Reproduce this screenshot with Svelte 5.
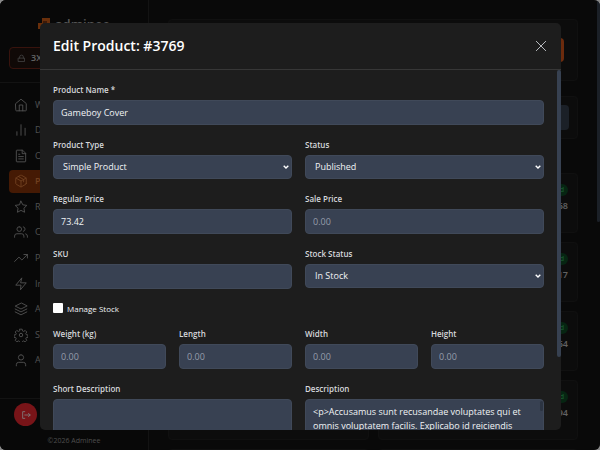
<script lang="ts">
	const nav = [
		{ label: 'Widgets', icon: 'home' },
		{ label: 'Dashboard', icon: 'bars' },
		{ label: 'Orders', icon: 'file' },
		{ label: 'Products', icon: 'box', active: true },
		{ label: 'Reviews', icon: 'star' },
		{ label: 'Customers', icon: 'users' },
		{ label: 'Performance', icon: 'trend' },
		{ label: 'Integrations', icon: 'bolt' },
		{ label: 'Apps', icon: 'layers' },
		{ label: 'Settings', icon: 'gear' },
		{ label: 'Account', icon: 'user' }
	];

	const icons: Record<string, string[]> = {
		home: ['M3 9.500l9-7.500 9 7.500V21a1 1 0 0 1-1 1H4a1 1 0 0 1-1-1z', 'M9 22V12h6v10'],
		bars: ['M5 21v-6', 'M12 21V3', 'M19 21V9'],
		file: ['M14 2H5a1 1 0 0 0-1 1v18a1 1 0 0 0 1 1h14a1 1 0 0 0 1-1V8z', 'M14 2v6h6', 'M8 9h2', 'M8 13h8', 'M8 17h8'],
		box: [
			'M21 16V8a2 2 0 0 0-1-1.730l-7-4a2 2 0 0 0-2 0l-7 4A2 2 0 0 0 3 8v8a2 2 0 0 0 1 1.730l7 4a2 2 0 0 0 2 0l7-4A2 2 0 0 0 21 16z',
			'M3.300 7L12 12l8.700-5',
			'M12 22V12',
			'M7.500 4.300l9 5.100v4'
		],
		star: ['M12 2l3.090 6.260L22 9.270l-5 4.870 1.180 6.880L12 17.770l-6.180 3.250L7 14.140 2 9.270l6.910-1.010z'],
		users: [
			'M17 21v-2a4 4 0 0 0-4-4H5a4 4 0 0 0-4 4v2',
			'M9 3a4 4 0 1 0 0 8 4 4 0 1 0 0-8',
			'M23 21v-2a4 4 0 0 0-3-3.870',
			'M16 3.130a4 4 0 0 1 0 7.750'
		],
		trend: ['M23 6l-9.500 9.500-5-5L1 18', 'M17 6h6v6'],
		bolt: ['M13 2L3 14h9l-1 8 10-12h-9z'],
		layers: ['M12 2L2 7l10 5 10-5z', 'M2 12l10 5 10-5', 'M2 17l10 5 10-5'],
		gear: [
			'M12 9a3 3 0 1 0 0 6 3 3 0 1 0 0-6',
			'M10 2h4l.6 3 2 .9 2.600-1.700 2.700 2.700-1.700 2.600.8 2 3 .5v4l-3 .5-.8 2 1.700 2.600-2.700 2.700-2.600-1.700-2 .9-.6 3h-4l-.6-3-2-.9-2.600 1.700-2.700-2.700 1.700-2.600-.8-2-3-.5v-4l3-.5.8-2-1.700-2.600 2.700-2.700 2.600 1.700 2-.9z'
		],
		user: ['M20 22v-2a4 4 0 0 0-4-4H8a4 4 0 0 0-4 4v2', 'M12 3a4.500 4.500 0 1 0 0 9 4.500 4.500 0 1 0 0-9'],
		lock: ['M4 11h16v9H4z', 'M7 11V8a5 5 0 0 1 10 0v3'],
		logout: ['M9 4H4v16h5', 'M9 12h13', 'M18 8l4 4-4 4'],
		close: ['M4 4l16 16', 'M20 4L4 20']
	};

	const products = ['$120.40', '$88.68', '$64.10', '$53.17', '$41.95', '$29.64', '$75.20', '$18.94'];

	let name = $state('Gameboy Cover');
	let regular = $state('73.42');
	let sale = $state('');
	let sku = $state('');
	let manage = $state(false);
	let short_description = $state('');
	let description = $state(
		'<p>Accusamus sunt recusandae voluptates qui et omnis voluptatem facilis. Explicabo id reiciendis'
	);
	const sizes = ['Weight (kg)', 'Length', 'Width', 'Height'];
</script>

{#snippet icon(key: string)}
	<svg class="icon" viewBox="0 0 24 24" aria-hidden="true">
		{#each icons[key] as d}<path {d} />{/each}
	</svg>
{/snippet}

{#snippet dropdown(id: string, value: string)}
	<div class="select">
		<select {id}><option>{value}</option></select>
		<svg viewBox="0 0 6 4" aria-hidden="true"><path d="M.7.7L3 3 5.300.7" /></svg>
	</div>
{/snippet}

<div class="app">
	<aside>
		<div class="logo">
			<svg viewBox="0 0 12 12" aria-hidden="true">
				<path d="M0 5h4v6H0zM4 0h8v11H8V7H4z" />
				<path class="shade" d="M5 3h4v4H5z" />
			</svg>
			adminee
		</div>
		<button class="store">{@render icon('lock')}3X Store</button>
		<nav>
			{#each nav as item}
				<a href="#{item.icon}" class:active={item.active}>{@render icon(item.icon)}{item.label}</a>
			{/each}
		</nav>
		<footer>
			<button class="logout" aria-label="Log out">{@render icon('logout')}</button>
			<small>©2026 Adminee</small>
		</footer>
	</aside>

	<main>
		<section class="panel top"><button class="add">Add</button></section>
		<section class="panel filter"><input class="search" aria-label="Search" /></section>
		<div class="products">
			{#each products as price}
				<article class="panel product">
					<span class="badge">Published</span>
					<span>{price}</span>
				</article>
			{/each}
			<article class="panel product"></article>
			<article class="panel product"></article>
		</div>
	</main>
	<div class="page-thumb"></div>

	<div class="overlay">
		<div class="modal" role="dialog" aria-modal="true" aria-labelledby="title">
			<header>
				<h2 id="title">Edit Product: #3769</h2>
				<button class="close" aria-label="Close">{@render icon('close')}</button>
			</header>
			<form>
				<div class="field full">
					<label for="name">Product Name *</label>
					<input id="name" bind:value={name} />
				</div>
				<div class="field half">
					<label for="type">Product Type</label>
					{@render dropdown('type', 'Simple Product')}
				</div>
				<div class="field half">
					<label for="status">Status</label>
					{@render dropdown('status', 'Published')}
				</div>
				<div class="field half">
					<label for="regular">Regular Price</label>
					<input id="regular" bind:value={regular} />
				</div>
				<div class="field half">
					<label for="sale">Sale Price</label>
					<input id="sale" placeholder="0.00" bind:value={sale} />
				</div>
				<div class="field half">
					<label for="sku">SKU</label>
					<input id="sku" bind:value={sku} />
				</div>
				<div class="field half">
					<label for="stock">Stock Status</label>
					{@render dropdown('stock', 'In Stock')}
				</div>
				<label class="check full"><input type="checkbox" bind:checked={manage} />Manage Stock</label>
				{#each sizes as size, i}
					<div class="field">
						<label for="size-{i}">{size}</label>
						<input id="size-{i}" placeholder="0.00" />
					</div>
				{/each}
				<div class="field half">
					<label for="short">Short Description</label>
					<textarea id="short" bind:value={short_description}></textarea>
				</div>
				<div class="field half scrolls">
					<label for="description">Description</label>
					<textarea id="description" bind:value={description}></textarea>
				</div>
				<div class="form-thumb"></div>
			</form>
		</div>
	</div>
</div>

<style>
	:global(body) {
		background: #8a8a8a;
	}

	.app,
	.app * {
		box-sizing: border-box;
	}

	.app {
		position: relative;
		display: flex;
		height: 100vh;
		overflow: hidden;
		border-radius: 6px;
		background: #131313;
		color: #c4c4c4;
		font: 9px/14px 'Open Sans', 'Noto Sans', sans-serif;
	}

	button,
	input,
	select,
	textarea {
		font: inherit;
		color: inherit;
	}

	.icon {
		flex: none;
		width: 14px;
		height: 14px;
		fill: none;
		stroke: currentColor;
		stroke-width: 1.6;
		stroke-linecap: round;
		stroke-linejoin: round;
	}

	aside {
		display: flex;
		flex-direction: column;
		flex: none;
		width: 149px;
		border-right: 1px solid #262626;
		background: #101010;
	}

	.logo {
		display: flex;
		align-items: center;
		justify-content: center;
		gap: 5px;
		height: 47px;
		font-size: 13px;
		font-weight: 600;
		color: #aaa;
	}

	.logo svg {
		width: 12px;
		height: 12px;
		fill: #d35f17;
	}

	.logo .shade {
		fill: #7c3410;
	}

	.store {
		display: flex;
		align-items: center;
		gap: 5px;
		height: 22px;
		margin: 0 9px 13px;
		padding: 0 7px;
		border: 1px solid #70271a;
		border-radius: 4px;
		background: #20120f;
		font-weight: 600;
	}

	.store .icon {
		width: 9px;
		height: 9px;
		stroke: #8a8a8a;
		stroke-width: 2;
	}

	nav {
		display: flex;
		flex: 1;
		flex-direction: column;
		justify-content: space-between;
		padding: 10px 9px 26px;
		border-top: 1px solid #262626;
	}

	nav a {
		display: flex;
		align-items: center;
		gap: 7px;
		height: 23px;
		padding: 0 5px;
		border-radius: 4px;
		color: #a0a0a0;
		text-decoration: none;
	}

	nav a.active {
		background: #8a3408;
		color: #e08040;
		font-weight: 600;
	}

	footer {
		display: flex;
		flex-direction: column;
		height: 52px;
		padding: 4px 14px 0;
		border-top: 1px solid #262626;
	}

	.logout {
		display: grid;
		place-items: center;
		width: 23px;
		height: 23px;
		padding: 0;
		border: 0;
		border-radius: 50%;
		background: #f02830;
		color: #fff;
	}

	.logout .icon {
		width: 10px;
		height: 10px;
		stroke-width: 2;
	}

	small {
		margin-top: 8px;
		font-size: 7px;
		text-align: center;
		color: #999;
	}

	main {
		flex: 1;
		padding: 19px 22px 0 19px;
	}

	.panel {
		display: flex;
		border: 1px solid #202020;
		border-radius: 4px;
		background: #191919;
	}

	.top {
		justify-content: flex-end;
		height: 62px;
		margin-bottom: 15px;
		padding: 18px 13px;
	}

	.add {
		width: 60px;
		height: 24px;
		border: 0;
		border-radius: 4px;
		background: #d8571b;
	}

	.filter {
		height: 43px;
		margin-bottom: 34px;
		padding: 8px;
	}

	.search {
		width: 100%;
		height: 25px;
		border: 0;
		border-radius: 4px;
		background: #37404f;
	}

	.products {
		display: grid;
		grid-template-columns: 1fr 1fr;
		gap: 9px;
	}

	.product {
		flex-direction: column;
		align-items: flex-end;
		gap: 3px;
		height: 60px;
		padding: 10px 9px;
		font-weight: 600;
	}

	.badge {
		height: 12px;
		padding: 0 4px;
		border-radius: 6px;
		background: #0d4a24;
		color: #2fae5c;
		font-size: 7px;
		line-height: 12px;
	}

	.page-thumb {
		position: absolute;
		top: 0;
		right: 0;
		width: 3px;
		height: 222px;
		border-radius: 2px;
		background: #37404f;
	}

	.overlay {
		position: absolute;
		inset: 0;
		padding: 23px 39px 20px 40px;
		background: rgb(0 0 0 / 50%);
	}

	.modal {
		display: flex;
		flex-direction: column;
		height: 100%;
		overflow: hidden;
		border-radius: 5px;
		background: #1d1d1d;
		color: #f1f3f5;
	}

	header {
		display: flex;
		flex: none;
		align-items: center;
		justify-content: space-between;
		height: 47px;
		padding: 0 13px;
		border-bottom: 1px solid #373737;
	}

	h2 {
		margin: 0;
		font-size: 14px;
		font-weight: 600;
		line-height: 20px;
		color: #fff;
	}

	.close {
		display: grid;
		padding: 0;
		border: 0;
		background: none;
		color: #c5c8cc;
	}

	form {
		position: relative;
		display: grid;
		flex: 1;
		grid-template-columns: repeat(4, 1fr);
		align-content: start;
		gap: 13px;
		min-height: 0;
		overflow: hidden;
		padding: 13px 17px 13px 13px;
	}

	.full {
		grid-column: span 4;
	}

	.half {
		grid-column: span 2;
	}

	.field {
		display: flex;
		flex-direction: column;
		gap: 4px;
		min-width: 0;
	}

	label {
		font-size: 8px;
		font-weight: 600;
		line-height: 13px;
		color: #d6d8dc;
	}

	.field input,
	select,
	textarea {
		width: 100%;
		height: 25px;
		margin: 0;
		padding: 0 7px;
		border: 1px solid #404959;
		border-radius: 4px;
		outline: 0;
		background: #384152;
	}

	::placeholder {
		color: #969dab;
		opacity: 1;
	}

	.select {
		position: relative;
		display: flex;
	}

	.select select {
		appearance: none;
		height: 24px;
		padding: 0 9px;
	}

	.select svg {
		position: absolute;
		top: 10px;
		right: 3px;
		width: 6px;
		height: 4px;
		fill: none;
		stroke: #fff;
		stroke-width: 1.4;
		pointer-events: none;
	}

	.field textarea {
		display: block;
		height: 60px;
		padding: 5px 7px;
		resize: none;
	}

	.scrolls {
		position: relative;
	}

	.scrolls::after {
		content: '';
		position: absolute;
		top: 19px;
		right: 1px;
		width: 3px;
		height: 10px;
		border-radius: 2px;
		background: #2c3442;
	}

	.check {
		display: flex;
		align-items: center;
		gap: 4px;
		height: 12px;
		font-weight: 400;
		color: #f1f3f5;
	}

	.check input {
		appearance: none;
		width: 10px;
		height: 10px;
		margin: 0;
		border-radius: 1px;
		background: #fff;
	}

	.check input:checked {
		background: #d8571b;
	}

	.form-thumb {
		position: absolute;
		top: 0;
		right: 0;
		width: 4px;
		height: 287px;
		border-radius: 2px;
		background: #374151;
	}
</style>
